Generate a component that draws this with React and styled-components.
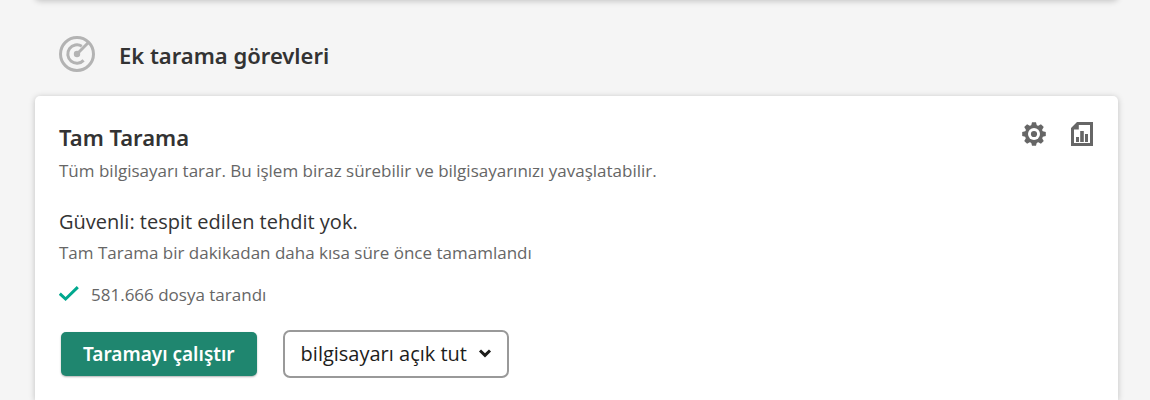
import React from "react";
import styled, { createGlobalStyle } from "styled-components";

const GlobalStyle = createGlobalStyle`
  * {
    box-sizing: border-box;
  }

  body {
    margin: 0;
    background-color: #f5f5f5;
    color: #333333;
    font-family: "Segoe UI", "Open Sans", sans-serif;
  }
`;

const Page = styled.main`
  padding: 0 32px 0 35px;
  overflow: hidden;
`;

const Panel = styled.section`
  background-color: #ffffff;
  border-radius: 5px;
  box-shadow: 0 1px 6px rgba(0, 0, 0, 0.22);
`;

// Lower edge of the card that is scrolled out above
const PreviousPanel = styled(Panel)`
  height: 24px;
  margin-top: -24px;
`;

const SectionHeader = styled.header`
  display: flex;
  align-items: center;
  gap: 24px;
  padding: 36px 24px 24px;
`;

const SectionTitle = styled.h2`
  margin: 0;
  padding-top: 2px;
  font-family: "Segoe UI", "Noto Sans", sans-serif;
  font-size: 22px;
  line-height: 28px;
  font-weight: 600;
`;

const TaskPanel = styled(Panel)`
  padding: 27px 24px 22px;
  border-radius: 5px 5px 0 0;
`;

const TaskHeader = styled.div`
  display: flex;
  justify-content: space-between;
  align-items: flex-start;
`;

const TaskTitle = styled.h3`
  margin: 0 0 8px;
  font-family: "Segoe UI", "Noto Sans", sans-serif;
  font-size: 22px;
  line-height: 28px;
  font-weight: 600;
`;

const Tools = styled.div`
  display: flex;
  gap: 24px;
  margin-top: -1px;
`;

const IconButton = styled.button`
  display: flex;
  padding: 0;
  border: 0;
  background: none;
  color: #666666;
  cursor: pointer;
`;

const Note = styled.p`
  margin: 0;
  font-size: 17px;
  line-height: 24px;
  color: #666666;
`;

const Status = styled.p`
  margin: 25px 0 5px;
  font-size: 20px;
  line-height: 28px;
`;

const Result = styled.div`
  display: flex;
  align-items: center;
  gap: 12px;
  margin-top: 18px;
`;

const Actions = styled.div`
  display: flex;
  align-items: center;
  gap: 26px;
  margin-top: 23px;
  padding-left: 2px;
`;

const RunButton = styled.button`
  height: 44px;
  padding: 0 22px;
  border: 0;
  border-radius: 5px;
  background-color: #1f866f;
  box-shadow: 0 1px 2px rgba(0, 0, 0, 0.3);
  color: #ffffff;
  font: 600 19px "Segoe UI", "Noto Sans", sans-serif;
  cursor: pointer;
`;

const SelectBox = styled.div`
  display: grid;
  align-items: center;

  > * {
    grid-area: 1 / 1;
  }

  > svg {
    justify-self: end;
    margin-right: 17px;
    pointer-events: none;
  }
`;

const Select = styled.select`
  appearance: none;
  height: 48px;
  padding: 0 39px 2px 16px;
  border: 2px solid #999999;
  border-radius: 7px;
  background-color: #ffffff;
  color: #1d1d1b;
  font: 20px "Segoe UI", "Open Sans", sans-serif;
  cursor: pointer;
`;

const ScanIcon = () => (
  <svg width="36" height="36" viewBox="0 0 36 36" fill="none" stroke="#b3b3b3" strokeWidth="3" aria-hidden="true">
    <circle cx="18" cy="18" r="16.5" />
    <path d="M22.8 10.2A9.2 9.2 0 1 0 24.6 24.4" />
    <path d="M18 18L29.2 6.8" />
    <circle cx="18" cy="18" r="3.2" fill="#b3b3b3" stroke="none" />
  </svg>
);

const GearIcon = () => (
  <svg width="24" height="24" viewBox="0 0 24 24" fill="currentColor" aria-hidden="true">
    {[0, 45, 90, 135].map((angle) => (
      <path key={angle} d="M10 0.2h4l1 4v15.6l-1 4h-4l-1-4V4.2z" transform={`rotate(${angle} 12 12)`} />
    ))}
    <circle cx="12" cy="12" r="9.2" />
    <circle cx="12" cy="12" r="6" fill="#ffffff" />
    <circle cx="12" cy="12" r="3.1" />
  </svg>
);

const ReportIcon = () => (
  <svg width="24" height="24" viewBox="0 0 24 24" fill="currentColor" aria-hidden="true">
    <path fillRule="evenodd" d="M7 0H23V24H1V6zM8.8 3V7.6H4V21H20V3z" />
    <path d="M6 15h3v5H6zM10.2 9h3.6v11h-3.6zM15 12h3v8h-3z" />
  </svg>
);

const CheckIcon = () => (
  <svg width="20" height="20" viewBox="0 0 20 20" fill="none" stroke="#00a88e" strokeWidth="3" aria-hidden="true">
    <path d="M0.8 8.6L6.6 14L18.8 2.1" />
  </svg>
);

const ChevronIcon = () => (
  <svg width="14" height="10" viewBox="0 0 14 10" fill="none" stroke="#1d1d1b" strokeWidth="3" aria-hidden="true">
    <path d="M2 1.5L7 6.3L12 1.5" />
  </svg>
);

const App = () => {
  return (
    <>
      <GlobalStyle />
      <Page>
        <PreviousPanel />
        <SectionHeader>
          <ScanIcon />
          <SectionTitle>Ek tarama görevleri</SectionTitle>
        </SectionHeader>
        <TaskPanel>
          <TaskHeader>
            <div>
              <TaskTitle>Tam Tarama</TaskTitle>
              <Note>Tüm bilgisayarı tarar. Bu işlem biraz sürebilir ve bilgisayarınızı yavaşlatabilir.</Note>
            </div>
            <Tools>
              <IconButton type="button" aria-label="Ayarlar">
                <GearIcon />
              </IconButton>
              <IconButton type="button" aria-label="Rapor">
                <ReportIcon />
              </IconButton>
            </Tools>
          </TaskHeader>
          <Status>Güvenli: tespit edilen tehdit yok.</Status>
          <Note>Tam Tarama bir dakikadan daha kısa süre önce tamamlandı</Note>
          <Result>
            <CheckIcon />
            <Note>581.666 dosya tarandı</Note>
          </Result>
          <Actions>
            <RunButton type="button">Taramayı çalıştır</RunButton>
            <SelectBox>
              <Select aria-label="Tarama sonrası" defaultValue="on">
                <option value="on">bilgisayarı açık tut</option>
              </Select>
              <ChevronIcon />
            </SelectBox>
          </Actions>
        </TaskPanel>
      </Page>
    </>
  );
};

export default App;
